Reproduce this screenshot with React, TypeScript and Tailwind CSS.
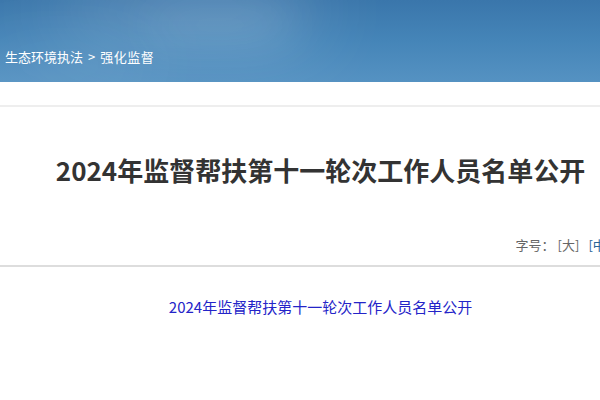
export default function App() {
  const title = '2024年监督帮扶第十一轮次工作人员名单公开';

  return (
    <div
      className="w-[600px] h-[400px] overflow-hidden bg-white"
      style={{ fontFamily: '"Noto Sans CJK SC", "Noto Sans", sans-serif' }}
    >
      {/* Banner */}
      <div className="relative h-[82px] bg-gradient-to-b from-[#3a76ab] via-[#4585b8] to-[#5592c2] overflow-hidden">
        <div className="absolute left-[60px] top-[-20px] w-[260px] h-[60px] rounded-full bg-white/20 blur-2xl" />
        <div className="absolute left-[150px] top-[10px] w-[140px] h-[30px] rounded-full bg-white/15 blur-xl" />
        <div className="absolute left-[-40px] top-[40px] w-[200px] h-[50px] rounded-full bg-white/10 blur-2xl" />
        <div className="relative flex pt-[47px] pl-[5px] text-[13px] text-white leading-[20px]">
          <span>生态环境执法</span>
          <span className="mx-[5px]">&gt;</span>
          <span className="tracking-[0.5px]">强化监督</span>
        </div>
      </div>

      {/* Main */}
      <div className="w-[641px]">
        <div className="h-[23px]" />
        <div className="h-[2px] bg-[#eeeeee]" />

        <h1 className="mt-[46px] text-center text-[26px] font-bold text-[#333333] leading-[34px]">
          {title}
        </h1>

        <div className="mt-[48px] flex justify-end text-[13px] text-[#666666] leading-[20px] whitespace-nowrap">
          <span>字号：</span>
          <span className="ml-[3px]">[大]</span>
          <span className="ml-[9px] text-[#2a6496]">[中]</span>
          <span className="ml-[9px]">[小]</span>
        </div>

        <div className="mt-[10px] h-[2px] bg-[#dddddd]" />

        <div className="mt-[29px] text-center text-[15px] text-[#2424c8] leading-[22px]">
          {title}
        </div>
      </div>
    </div>
  );
}
